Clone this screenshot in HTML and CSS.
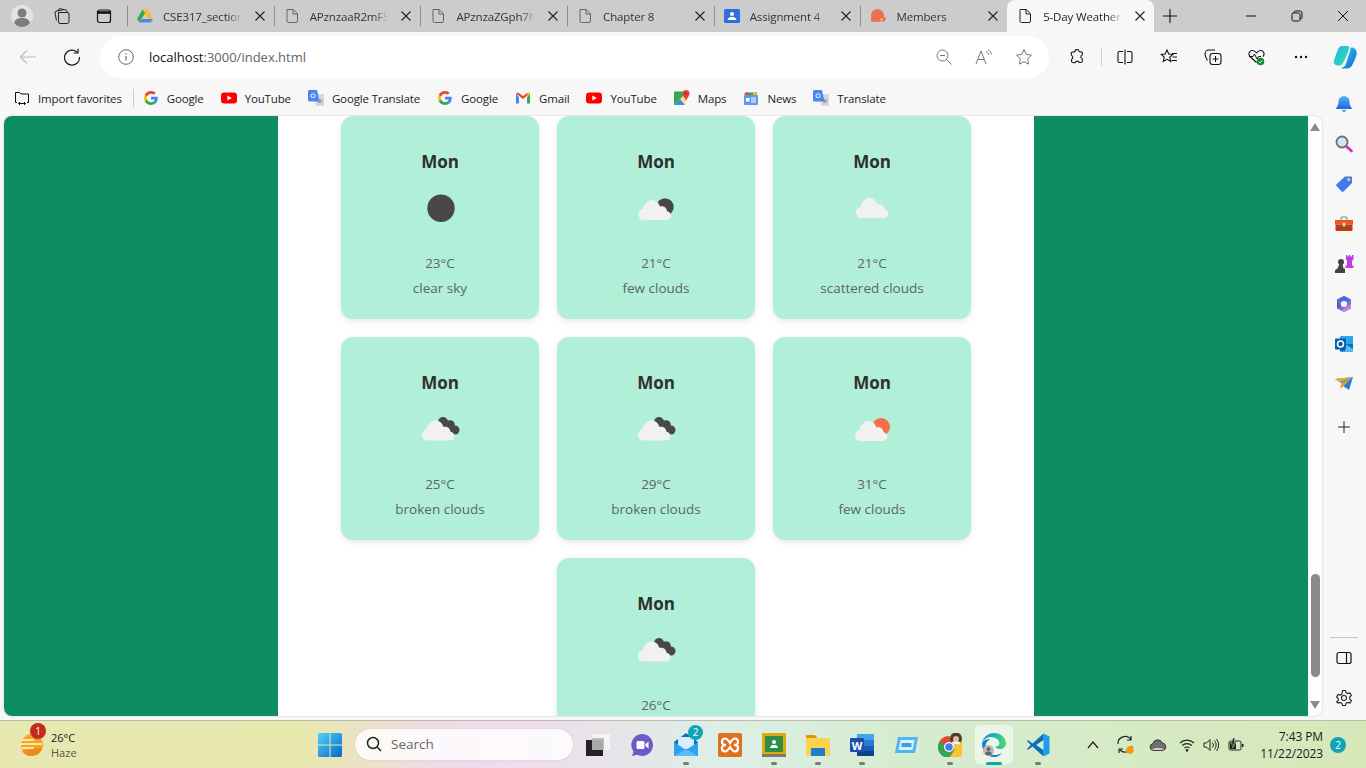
FILE: index.html
```html
<!DOCTYPE html>
<html lang="en">
<head>
  <meta charset="UTF-8">
  <title>5-Day Weather</title>
  <link rel="stylesheet" href="styles.css">
</head>
<body>
  <svg class="defs" xmlns="http://www.w3.org/2000/svg">
    <symbol id="i-x" viewBox="0 0 16 16"><path d="M3.500 3.500l9 9M12.500 3.500l-9 9" fill="none" stroke="currentColor" stroke-width="1.100"/></symbol>
    <symbol id="i-doc" viewBox="0 0 16 16"><path d="M3 1.500h6.200L13.500 5.800V13a1.500 1.500 0 0 1-1.500 1.500H4.500A1.500 1.500 0 0 1 3 13zM9 1.500V6h4.500" fill="none" stroke="currentColor" stroke-width="1"/></symbol>
    <symbol id="i-g" viewBox="0 0 48 48">
      <path fill="#EA4335" d="M24 9.500c3.540 0 6.710 1.220 9.210 3.600l6.850-6.850C35.900 2.380 30.470 0 24 0 14.620 0 6.510 5.380 2.560 13.220l7.980 6.190C12.430 13.720 17.740 9.500 24 9.500z"/>
      <path fill="#4285F4" d="M46.980 24.550c0-1.570-.15-3.090-.38-4.550H24v9.020h12.940c-.58 2.960-2.260 5.480-4.780 7.180l7.730 6c4.510-4.180 7.090-10.360 7.090-17.650z"/>
      <path fill="#FBBC05" d="M10.530 28.590c-.48-1.450-.76-2.990-.76-4.590s.27-3.140.76-4.590l-7.980-6.190C.92 16.460 0 20.120 0 24c0 3.880.92 7.540 2.560 10.780l7.970-6.190z"/>
      <path fill="#34A853" d="M24 48c6.480 0 11.930-2.130 15.890-5.810l-7.730-6c-2.150 1.450-4.920 2.300-8.160 2.300-6.260 0-11.570-4.220-13.470-9.910l-7.980 6.190C6.510 42.620 14.620 48 24 48z"/>
    </symbol>
    <symbol id="i-yt" viewBox="0 0 16 16"><rect y="2.500" width="16" height="11" rx="3" fill="#f00"/><path d="M6.400 5.400v5.200L10.800 8z" fill="#fff"/></symbol>
    <symbol id="i-tr" viewBox="0 0 16 16"><path d="M6 4h10v12H8z" fill="#d4d7dc"/><path d="M12 8l.9 2 2 .2-1.500 1.400.4 2-1.800-1-1.800 1 .4-2-1.500-1.400 2-.2z" fill="#9aa0a6"/><path d="M1.500 0H9l2.500 11.500H1.500A1.500 1.500 0 0 1 0 10V1.500A1.500 1.500 0 0 1 1.500 0z" fill="#4a86f0"/><rect x="3" y="4" width="4" height="3.500" rx="1.500" fill="none" stroke="#fff" stroke-width="1"/></symbol>
    <symbol id="i-cloud" viewBox="0 0 34 22"><path d="M6.500 21.500a5.500 5.500 0 0 1-1-10.900C6.500 5 10.500 1.500 14.500 1.500c3.800 0 7 2.800 8 6.500.6-.2 1.200-.3 1.800-.3 3 0 5 2.200 5.200 5 2.400.3 4 2.200 4 4.500 0 2.500-2 4.300-4.500 4.300z" fill="#f1f1f1"/></symbol>
    <symbol id="i-broken" viewBox="0 0 60 60"><circle cx="33" cy="23" r="5" fill="#48484a"/><circle cx="40" cy="26" r="4.800" fill="#48484a"/><circle cx="45" cy="31" r="4.500" fill="#48484a"/><path d="M30 24l8 8 5 3 5-6-14-9z" fill="#48484a"/></symbol>
  </svg>

  <header class="tabstrip">
    <div class="strip-btn">
      <svg width="24" height="24" viewBox="0 0 24 24"><circle cx="12" cy="12" r="11" fill="#e3e3e1"/><circle cx="12" cy="9" r="4.500" fill="#7d7d7b"/><path d="M4 19c1-4 4-5 8-5s7 1 8 5c-2 2.500-5 4-8 4s-6-1.500-8-4z" fill="#7d7d7b"/></svg>
    </div>
    <div class="strip-btn">
      <svg width="18" height="18" viewBox="0 0 18 18" fill="none" stroke="#222" stroke-width="1"><path d="M5.500 5.500h9a1.500 1.500 0 0 1 1.500 1.500v7.500a2 2 0 0 1-2 2H7a1.500 1.500 0 0 1-1.500-1.500z"/><path d="M3.500 13.500 2 6a1.500 1.500 0 0 1 1.200-1.800L11 2.500"/><path d="M4.500 4l1-1.500A1.500 1.500 0 0 1 7 1.700l6.500 1.500 1 2.300"/></svg>
    </div>
    <div class="strip-btn strip-btn-last">
      <svg width="16" height="16" viewBox="0 0 16 16" fill="none" stroke="#111" stroke-width="1.200"><rect x="1.500" y="2" width="13" height="12.500" rx="2"/><path d="M1.500 4.500h13" stroke-width="2.600"/></svg>
    </div>

    <div class="tab">
      <svg class="tab-icon" width="16" height="16" viewBox="0 0 16 16"><path d="M5.500 1.500h5L16 11h-5z" fill="#f6bf26"/><path d="M5.500 1.500 0 11l2.500 3.500L8 5z" fill="#34a853"/><path d="M2.500 14.500h11L16 11H5z" fill="#4a86f0"/></svg>
      <span class="tab-title">CSE317_section</span>
      <svg class="tab-x" width="16" height="16"><use href="#i-x"/></svg>
    </div>
    <div class="tab">
      <svg class="tab-icon doc" width="16" height="16"><use href="#i-doc"/></svg>
      <span class="tab-title">APznzaaR2mF5</span>
      <svg class="tab-x" width="16" height="16"><use href="#i-x"/></svg>
    </div>
    <div class="tab">
      <svg class="tab-icon doc" width="16" height="16"><use href="#i-doc"/></svg>
      <span class="tab-title">APznzaZGph7N</span>
      <svg class="tab-x" width="16" height="16"><use href="#i-x"/></svg>
    </div>
    <div class="tab">
      <svg class="tab-icon doc" width="16" height="16"><use href="#i-doc"/></svg>
      <span class="tab-title">Chapter 8</span>
      <svg class="tab-x" width="16" height="16"><use href="#i-x"/></svg>
    </div>
    <div class="tab">
      <svg class="tab-icon" width="16" height="16" viewBox="0 0 16 16"><rect y="1" width="16" height="14" rx="1.500" fill="#2f6fdd"/><circle cx="8" cy="6" r="2" fill="#fff"/><path d="M3.500 12c.5-2.500 2.500-3.200 4.500-3.200s4 .7 4.500 3.200z" fill="#fff"/></svg>
      <span class="tab-title">Assignment 4</span>
      <svg class="tab-x" width="16" height="16"><use href="#i-x"/></svg>
    </div>
    <div class="tab">
      <svg class="tab-icon" width="16" height="16" viewBox="0 0 16 16"><circle cx="7.500" cy="7.500" r="6.500" fill="#e9714f"/><path d="M1 9h14.500v2.500a2 2 0 0 1-2 2H4c-2 1.500-3.500 0-3-2z" fill="#e9714f"/><circle cx="11.500" cy="11.500" r="1.200" fill="#f3b9a4"/></svg>
      <span class="tab-title">Members</span>
      <svg class="tab-x" width="16" height="16"><use href="#i-x"/></svg>
    </div>
    <div class="tab tab-active">
      <svg class="tab-icon" width="16" height="16"><use href="#i-doc"/></svg>
      <span class="tab-title">5-Day Weather</span>
      <svg class="tab-x" width="16" height="16"><use href="#i-x"/></svg>
    </div>
    <div class="new-tab">
      <svg width="16" height="16" viewBox="0 0 16 16"><path d="M8 1v14M1 8h14" stroke="#111" stroke-width="1.100"/></svg>
    </div>

    <div class="win-btns">
      <div class="win-btn"><svg width="12" height="12" viewBox="0 0 12 12"><path d="M1 6h10" stroke="#111"/></svg></div>
      <div class="win-btn"><svg width="12" height="12" viewBox="0 0 12 12" fill="none" stroke="#111"><rect x="1" y="3" width="8" height="8" rx="1.500"/><path d="M3 3V2.500A1.500 1.500 0 0 1 4.500 1H9a2 2 0 0 1 2 2v4.500A1.500 1.500 0 0 1 9 9"/></svg></div>
      <div class="win-btn"><svg width="12" height="12" viewBox="0 0 12 12"><path d="M1 1l10 10M11 1L1 11" stroke="#111"/></svg></div>
    </div>
  </header>

  <div class="toolbar">
    <div class="tool">
      <svg width="18" height="18" viewBox="0 0 18 18" fill="none" stroke="#bdbdbd" stroke-width="1.200"><path d="M17 9H1.500M8 2.500 1.500 9 8 15.500"/></svg>
    </div>
    <div class="tool">
      <svg width="18" height="18" viewBox="0 0 18 18" fill="none" stroke="#1a1a1a" stroke-width="1.200"><path d="M14.500 4.500A7.500 7.500 0 1 0 16.500 9"/><path d="M15 .8v4.200h-4.200"/></svg>
    </div>
    <div class="address">
      <svg class="addr-info" width="16" height="16" viewBox="0 0 16 16" fill="none" stroke="#666"><circle cx="8" cy="8" r="7.300"/><path d="M8 7v4.500M8 4.300v1.200" stroke-width="1.200"/></svg>
      <span class="url"><span class="url-host">localhost</span>:3000/index.html</span>
      <div class="addr-tools">
        <div class="addr-tool"><svg width="16" height="16" viewBox="0 0 16 16" fill="none" stroke="#777"><circle cx="6.500" cy="6.500" r="5.500"/><path d="M4 6.500h5M10.500 10.500l5 5"/></svg></div>
        <div class="addr-tool"><svg width="18" height="16" viewBox="0 0 18 16" fill="none" stroke="#777"><path d="M1 15 6 2l5 13M2.800 10.500h6.400"/><path d="M11 2.500c1.500.5 2.500 1.800 2.500 3.300M13 1c2 .7 3.300 2.500 3.300 4.500"/></svg></div>
        <div class="addr-tool"><svg width="18" height="18" viewBox="0 0 18 18" fill="none" stroke="#777"><path d="m9 1.500 2.300 4.900 5.200.7-3.800 3.700.9 5.300L9 13.600l-4.600 2.500.9-5.300L1.500 7.100l5.200-.7z"/></svg></div>
      </div>
    </div>
    <div class="tool tool-ext">
      <svg width="16" height="16" viewBox="0 0 16 16" fill="none" stroke="#111" stroke-width="1.100"><path d="M6 2.500a2 2 0 0 1 4 0c0 .5 2.500.2 3 .7s.5 2.800 0 3c-1.500.3-1.500 3 0 3.300.5.300.5 2.800 0 3.500s-2.500.5-3 .2c-.3-1.500-3.200-1.500-3.500 0-1 .7-3 .7-3.500 0s-.3-2.700-.2-3c1.200-.5 1.200-3.300 0-3.500C2 6 2 3.700 2.800 3.200S5.800 3.300 6 2.500z"/></svg>
    </div>
    <span class="tool-sep"></span>
    <div class="tool">
      <svg width="16" height="16" viewBox="0 0 16 16" fill="none" stroke="#111" stroke-width="1.100"><path d="M6 2.500H2.500a1.500 1.500 0 0 0-1.500 1.500v8a1.500 1.500 0 0 0 1.500 1.500H6M10 2.500h3.500A1.500 1.500 0 0 1 15 4v8a1.500 1.500 0 0 1-1.500 1.500H10M8 .5v15"/></svg>
    </div>
    <div class="tool">
      <svg width="18" height="18" viewBox="0 0 18 18" fill="none" stroke="#111" stroke-width="1.100"><path d="m7 2 1.800 4 4 .4-3 2.800.9 4.300L7 11.300 3.300 13.500l.9-4.300-3-2.800 4-.4z"/><path d="M12 5.500h5M12.500 9h4.500M11.500 12.500H17"/></svg>
    </div>
    <div class="tool">
      <svg width="18" height="18" viewBox="0 0 18 18" fill="none" stroke="#111" stroke-width="1.100"><rect x="6" y="5.500" width="11" height="11" rx="2.500"/><path d="M11.500 8v6M8.500 11h6"/><path d="M3.500 12.500C2 10 1 8 1 6c0-2 1.500-4 3.500-4H11"/></svg>
    </div>
    <div class="tool">
      <svg width="18" height="18" viewBox="0 0 18 18"><path d="M8.500 14.500 2 8.500C0 6.500 1 3 3.800 2.500c2-.3 3.500.8 4.700 2.300 1.200-1.500 2.700-2.600 4.700-2.300 2.800.5 3.800 4 1.800 6" fill="none" stroke="#111" stroke-width="1.100"/><path d="M1 8.500h4l1.500-2.500L9 11l1.500-2.500H13" fill="none" stroke="#111"/><circle cx="12.500" cy="13.500" r="3.800" fill="#178a2e"/><path d="m10.800 13.500 1.300 1.300 2.200-2.300" fill="none" stroke="#fff"/></svg>
    </div>
    <div class="tool">
      <svg width="14" height="4" viewBox="0 0 14 4" fill="#111"><circle cx="2" cy="2" r="1.200"/><circle cx="7" cy="2" r="1.200"/><circle cx="12" cy="2" r="1.200"/></svg>
    </div>
    <div class="tool tool-last">
      <svg width="24" height="24" viewBox="0 0 24 24">
        <defs>
          <linearGradient id="cop-a" x1="0" y1="0" x2="1" y2="1"><stop offset="0" stop-color="#1fb8ee"/><stop offset="1" stop-color="#2ce0a0"/></linearGradient>
          <linearGradient id="cop-b" x1="0" y1="0" x2="1" y2="1"><stop offset="0" stop-color="#2ad4e4"/><stop offset="1" stop-color="#1560dc"/></linearGradient>
        </defs>
        <path class="cop-a" d="M9 1.500h5.500c1.500 0 1.800 1 1.300 2L12 13c-1 2.500-3 7-5 7H4.500C2 20 .8 18 1.300 16L5 5.500C5.800 3 7 1.500 9 1.500z" fill="url(#cop-a)" stroke="url(#cop-a)"/>
        <path d="M18 3h1c2 0 3.500 1 4 3.500.8 4-1 6-1.800 8.500L19 19.500c-1 2.500-2.500 3.500-5 3.500H9c2 0 3.500-2 4.500-4.500l4-12.500c.3-1 .5-2 .5-3z" fill="url(#cop-b)" stroke="url(#cop-b)"/>
      </svg>
    </div>
  </div>

  <div class="below">
    <div class="browser-main">
      <nav class="favbar">
        <div class="fav fav-import">
          <svg width="16" height="16" viewBox="0 0 16 16" fill="none" stroke="#111"><path d="M3 12.500H1.500V2.500h4L7 4h7.500v8.500H13"/><path d="M4.500 13.500h7M6 12l-1.500 1.500L6 15M10 12l1.500 1.500L10 15"/></svg>
          <span>Import favorites</span>
        </div>
        <span class="fav-sep"></span>
        <div class="fav"><svg width="16" height="14"><use href="#i-g"/></svg><span>Google</span></div>
        <div class="fav"><svg width="16" height="16"><use href="#i-yt"/></svg><span>YouTube</span></div>
        <div class="fav"><svg width="16" height="16"><use href="#i-tr"/></svg><span>Google Translate</span></div>
        <div class="fav"><svg width="16" height="14"><use href="#i-g"/></svg><span>Google</span></div>
        <div class="fav">
          <svg width="16" height="16" viewBox="0 0 16 16"><path d="M1 3.500v10h3v-6z" fill="#4285f4"/><path d="M15 3.500v10h-3v-6z" fill="#34a853"/><path d="M1 3.500 8 9l7-5.500-2-1L8 6 3 2.500z" fill="#ea4335"/><path d="M12 7.500 15 3.500 13.500 2.500 12 4z" fill="#fbbc04"/></svg>
          <span>Gmail</span>
        </div>
        <div class="fav"><svg width="16" height="16"><use href="#i-yt"/></svg><span>YouTube</span></div>
        <div class="fav">
          <svg width="16" height="16" viewBox="0 0 16 16"><path d="M0 1.500h11V15H0z" fill="#34a853"/><path d="M0 15 11 4v11z" fill="#fbe084"/><path d="M0 15l6-6 5 6z" fill="#4a86f0"/><path d="M12 0a3.600 3.600 0 0 1 3.600 3.600C15.600 6 13 8 12 11c-1-3-3.600-5-3.600-7.400A3.600 3.600 0 0 1 12 0z" fill="#ea4335"/><circle cx="12" cy="3.600" r="1.200" fill="#a52714"/></svg>
          <span>Maps</span>
        </div>
        <div class="fav">
          <svg width="16" height="16" viewBox="0 0 16 16"><path d="M2 2.500h12V6H2z" fill="#34a853"/><path d="M1.500 3.500 5 2l2 3H1.500z" fill="#ea4335"/><path d="M10 2l4.500 2L14 5h-4z" fill="#fbbc04"/><rect x="1" y="5" width="14" height="10" rx="1.200" fill="#5e97f6"/><rect x="3" y="8" width="3.500" height="3.500" fill="#fff"/><path d="M8 8h5M8 10h5M8 12h5" stroke="#fff"/></svg>
          <span>News</span>
        </div>
        <div class="fav"><svg width="16" height="16"><use href="#i-tr"/></svg><span>Translate</span></div>
      </nav>

      <div class="viewport">
        <main class="page">
          <div class="forecast">
            <section class="card">
              <h3>Mon</h3>
              <svg class="wx" width="60" height="60" viewBox="0 0 60 60"><circle cx="31" cy="30.300" r="13.700" fill="#48484a"/></svg>
              <p class="temp">23°C</p>
              <p class="desc">clear sky</p>
            </section>
            <section class="card">
              <h3>Mon</h3>
              <svg class="wx" width="60" height="60" viewBox="0 0 60 60"><circle cx="39" cy="29" r="8.700" fill="#48484a"/><use href="#i-cloud" x="11.500" y="20.500" width="34" height="22"/></svg>
              <p class="temp">21°C</p>
              <p class="desc">few clouds</p>
            </section>
            <section class="card">
              <h3>Mon</h3>
              <svg class="wx" width="60" height="60" viewBox="0 0 60 60"><use href="#i-cloud" x="13" y="18.500" width="34" height="22"/></svg>
              <p class="temp">21°C</p>
              <p class="desc">scattered clouds</p>
            </section>
            <section class="card">
              <h3>Mon</h3>
              <svg class="wx" width="60" height="60" viewBox="0 0 60 60"><use href="#i-broken" width="60" height="60"/><use href="#i-cloud" x="11" y="20" width="34" height="22"/></svg>
              <p class="temp">25°C</p>
              <p class="desc">broken clouds</p>
            </section>
            <section class="card">
              <h3>Mon</h3>
              <svg class="wx" width="60" height="60" viewBox="0 0 60 60"><use href="#i-broken" width="60" height="60"/><use href="#i-cloud" x="11" y="20" width="34" height="22"/></svg>
              <p class="temp">29°C</p>
              <p class="desc">broken clouds</p>
            </section>
            <section class="card">
              <h3>Mon</h3>
              <svg class="wx" width="60" height="60" viewBox="0 0 60 60"><circle cx="39" cy="28" r="9" fill="#f4704a"/><use href="#i-cloud" x="12" y="20.500" width="34" height="22"/></svg>
              <p class="temp">31°C</p>
              <p class="desc">few clouds</p>
            </section>
            <section class="card">
              <h3>Mon</h3>
              <svg class="wx" width="60" height="60" viewBox="0 0 60 60"><use href="#i-broken" width="60" height="60"/><use href="#i-cloud" x="11" y="20" width="34" height="22"/></svg>
              <p class="temp">26°C</p>
            </section>
          </div>
        </main>
        <div class="page-scroll">
          <svg class="scroll-arrow" width="10" height="8" viewBox="0 0 10 8"><path d="M5 0l5 8H0z" fill="#8a8a8a"/></svg>
          <div class="scroll-thumb"></div>
          <svg class="scroll-arrow" width="10" height="8" viewBox="0 0 10 8"><path d="M5 8l5-8H0z" fill="#8a8a8a"/></svg>
        </div>
      </div>
    </div>

    <aside class="sidebar">
      <div class="side-item">
        <svg width="18" height="18" viewBox="0 0 18 18"><defs><linearGradient id="bell" x1="0" y1="0" x2="0" y2="1"><stop offset="0" stop-color="#5ab4f8"/><stop offset="1" stop-color="#1668e8"/></linearGradient></defs><path d="M9 1a5.500 5.500 0 0 1 5.500 5.500c0 4 1.500 5 2.500 7.500H1c1-2.500 2.500-3.500 2.500-7.500A5.500 5.500 0 0 1 9 1z" fill="url(#bell)"/><path d="M6.500 15h5L9 17.500z" fill="#7d8ba0"/></svg>
      </div>
      <div class="side-item">
        <svg width="18" height="18" viewBox="0 0 18 18"><circle cx="7" cy="7" r="5.500" fill="#cfe6f4" stroke="#6f6f6f" stroke-width="1.800"/><path d="m11.500 11.500 5 4.500" stroke="#c42fd0" stroke-width="2.600" stroke-linecap="round"/></svg>
      </div>
      <div class="side-item">
        <svg width="18" height="18" viewBox="0 0 18 18"><path d="M10 1.500h6a1 1 0 0 1 1 1V8l-8.500 8.500a1.300 1.300 0 0 1-1.800 0L1.500 11a1.300 1.300 0 0 1 0-1.800z" fill="#3d7bea"/><circle cx="13.800" cy="4.500" r="1.500" fill="#f7cf4a"/></svg>
      </div>
      <div class="side-item">
        <svg width="18" height="18" viewBox="0 0 18 18"><path d="M6 5V3.500A1.500 1.500 0 0 1 7.500 2h3A1.500 1.500 0 0 1 12 3.500V5" fill="none" stroke="#888" stroke-width="1.200"/><path d="M0 5h18v4.500H0z" fill="#e9591f"/><path d="M.5 9.500h17V15a1 1 0 0 1-1 1h-15a1 1 0 0 1-1-1z" fill="#b83c10"/><rect x="7.500" y="7.500" width="3" height="4" rx=".8" fill="#cfcfcf"/></svg>
      </div>
      <div class="side-item">
        <svg width="20" height="20" viewBox="0 0 20 20"><path d="M12 1h1.500v1.500H15V1h1.500v1.500H18V1h1.500v4.500L18 7v4.500h1.500V14h-8v-2.500H13V7l-1-1.500z" fill="#c43be6"/><circle cx="7" cy="8" r="3" fill="#444"/><path d="M5.500 10h3l1 4.500H11V19H1v-2.500c0-1 1.500-1 2.500-2z" fill="#444"/></svg>
      </div>
      <div class="side-item">
        <svg width="18" height="18" viewBox="0 0 18 18"><path d="M9 1 16 4.500v9L9 17l-7-3.500v-9z" fill="#8f68d8"/><path d="M2 4.500 9 1l7 3.500L9 8z" fill="#3f6fe0"/><path d="M2 4.500V13.500l4-2z" fill="#5b52c8"/><path d="M16 9v4.500L9 17l-3-1.500z" fill="#b68be0"/><circle cx="9" cy="9" r="3" fill="#fff"/></svg>
      </div>
      <div class="side-item">
        <svg width="18" height="18" viewBox="0 0 18 18"><rect x="5" y="1" width="13" height="15.500" rx="1" fill="#28a8ea"/><path d="M5 9h13v7.500H5z" fill="#0b6fc0"/><path d="M10 9l8 5v2.500H10z" fill="#4fc3f7"/><rect y="3.500" width="11" height="11" rx="1" fill="#0a5cb0"/><circle cx="5.500" cy="9" r="3" fill="none" stroke="#fff" stroke-width="1.500"/></svg>
      </div>
      <div class="side-item">
        <svg width="18" height="18" viewBox="0 0 18 18"><path d="M0 4 18 2 9 10z" fill="#36a0ec"/><path d="M18 2 5 7 0 4z" fill="#f2a71c"/><path d="M18 2 14 15l-7.500-5z" fill="#1f7fd8"/><path d="M18 2 6 9 5 14l3.500-3z" fill="#e8a020"/></svg>
      </div>
      <div class="side-item side-add">
        <svg width="14" height="14" viewBox="0 0 14 14"><path d="M7 1v12M1 7h12" stroke="#222"/></svg>
      </div>
      <div class="side-bottom">
        <span class="side-sep"></span>
        <div class="side-item">
          <svg width="16" height="14" viewBox="0 0 16 14" fill="none" stroke="#111" stroke-width="1.200"><rect x="1" y="1.500" width="14" height="11" rx="2"/><path d="M10.500 1.500v11"/></svg>
        </div>
        <div class="side-item">
          <svg width="18" height="18" viewBox="0 0 18 18" fill="none" stroke="#222" stroke-width="1.100"><circle cx="9" cy="9" r="2.500"/><path d="M7.500 1.500h3l.5 2.200 1.700.9 2.200-.7 1.500 2.600-1.700 1.500v2l1.700 1.500-1.500 2.600-2.200-.7-1.700.9-.5 2.200h-3l-.5-2.200-1.700-.9-2.200.7L1.600 13l1.700-1.500v-2L1.600 8l1.500-2.600 2.200.7L7 5.200z"/></svg>
        </div>
      </div>
    </aside>
  </div>

  <footer class="taskbar">
    <div class="tb-weather">
      <span class="tb-wicon">
        <svg width="26" height="26" viewBox="0 0 26 26"><circle cx="13" cy="13" r="11" fill="#f5a623"/><path d="M2 8h13M1 12h22M3 16h12" stroke="#fbe7a8" stroke-width="2"/><path d="M3 19a11 11 0 0 0 20-4z" fill="#ef8b1e"/></svg>
        <span class="tb-badge">1</span>
      </span>
      <div class="tb-wtext">
        <span class="tb-temp">26°C</span>
        <span class="tb-cond">Haze</span>
      </div>
    </div>

    <svg class="tb-start" width="24" height="24" viewBox="0 0 24 24">
      <defs><linearGradient id="win" x1="0" y1="0" x2="1" y2="1"><stop offset="0" stop-color="#52d1fb"/><stop offset="1" stop-color="#0668c8"/></linearGradient></defs>
      <path d="M1.500 0H11.500V11.500H0V1.500A1.500 1.500 0 0 1 1.500 0zM12.500 0H22.500A1.500 1.500 0 0 1 24 1.500V11.500H12.500zM0 12.500H11.500V24H1.500A1.500 1.500 0 0 1 0 22.500zM12.500 12.500H24V22.500A1.500 1.500 0 0 1 22.500 24H12.500z" fill="url(#win)"/>
    </svg>

    <div class="tb-search">
      <svg width="16" height="16" viewBox="0 0 16 16" fill="none" stroke="#222" stroke-width="1.500"><circle cx="7" cy="7" r="5.500"/><path d="m11 11 4 4"/></svg>
      <span>Search</span>
    </div>

    <div class="tb-apps">
      <div class="tb-app">
        <svg width="24" height="24" viewBox="0 0 24 24"><rect x="6" y="1" width="18" height="16" fill="#f4f4f4"/><path d="M6 5h12v12H6z" fill="#bdbdbd"/><rect y="7" width="17" height="16" fill="#222"/><path d="M6 7h11v10H6z" fill="#a8a8a8"/></svg>
      </div>
      <div class="tb-app">
        <svg width="24" height="24" viewBox="0 0 24 24"><path d="M12 1a11 11 0 1 1-5 20.800L2 23l1.500-4.500A11 11 0 0 1 12 1z" fill="#6b5ac8"/><rect x="6.500" y="8" width="8" height="8" rx="1.500" fill="#fff"/><path d="m15.500 11 3-2.500v7l-3-2.500z" fill="#fff"/></svg>
      </div>
      <div class="tb-app">
        <svg width="24" height="24" viewBox="0 0 24 24"><path d="M0 9 12 0l12 9v14H0z" fill="#0f6cbd"/><path d="M4 4h16v12H4z" fill="#d8ecfa"/><path d="M0 9v14h24V9L12 17z" fill="#2aa3ee"/><path d="m0 23 12-7 12 7z" fill="#59bdf5"/></svg>
        <span class="tb-app-badge">2</span>
        <span class="tb-dot"></span>
      </div>
      <div class="tb-app">
        <svg width="24" height="24" viewBox="0 0 24 24"><rect width="24" height="24" rx="2" fill="#e0701e"/><path d="M7 5.500c2 0 3.500 2 5 4.500 1.500-2.500 3-4.500 5-4.500 2.500 0 3 2 3 3.500 0 2-2 3-4 3 2 0 4 1 4 3 0 1.500-.5 3.500-3 3.500-2 0-3.500-2-5-4.500-1.500 2.500-3 4.500-5 4.500-2.500 0-3-2-3-3.500 0-2 2-3 4-3-2 0-4-1-4-3 0-1.500.5-3.500 3-3.500z" fill="none" stroke="#fff" stroke-width="2.200"/></svg>
      </div>
      <div class="tb-app">
        <svg width="24" height="24" viewBox="0 0 24 24"><rect width="24" height="24" fill="#e0a912"/><rect y="21" width="24" height="3" fill="#7c7c6c"/><rect x="3" y="3" width="18" height="16" fill="#2d8f47"/><circle cx="12" cy="9" r="2" fill="#fff"/><path d="M8 15c.5-2.500 2-3 4-3s3.500.5 4 3z" fill="#fff"/></svg>
        <span class="tb-dot"></span>
      </div>
      <div class="tb-app">
        <svg width="24" height="24" viewBox="0 0 24 24"><path d="M0 2h9l2.500 3H0z" fill="#d99a10"/><path d="M0 5h24v17a1 1 0 0 1-1 1H1a1 1 0 0 1-1-1z" fill="#fcd34f"/><path d="M6 15h12a1 1 0 0 1 1 1v7H5v-7a1 1 0 0 1 1-1z" fill="#1f7fc4"/></svg>
        <span class="tb-dot"></span>
      </div>
      <div class="tb-app">
        <svg width="24" height="24" viewBox="0 0 24 24"><rect x="7" y="1" width="17" height="6" fill="#41a5ee"/><rect x="7" y="7" width="17" height="6" fill="#2b7cd3"/><rect x="7" y="13" width="17" height="5" fill="#185abd"/><rect x="7" y="18" width="17" height="5" fill="#103f91"/><rect y="5" width="14" height="14" rx="1" fill="#1a4fb0"/><text class="tb-w" x="7" y="16.500">W</text></svg>
        <span class="tb-dot"></span>
      </div>
      <div class="tb-app">
        <svg width="24" height="24" viewBox="0 0 24 24"><path d="M4 4h20l-3 16H1z" fill="#4fb7ef"/><path d="M6.500 7h14l-2 10H4.500z" fill="#d8f1fc"/><rect x="7.500" y="10" width="10" height="4" fill="#3aa0e0"/></svg>
      </div>
      <div class="tb-app">
        <svg width="24" height="24" viewBox="0 0 24 24"><circle cx="11" cy="14" r="11" fill="#e5463a"/><path d="M11 14 1.500 8.500A11 11 0 0 0 11 25l5-8z" fill="#35a455"/><path d="M11 3h9.600A11 11 0 0 1 11 25l5.500-8z" fill="#f8c62c"/><circle cx="11" cy="14" r="5" fill="#fff"/><circle cx="11" cy="14" r="3.800" fill="#3f7fe8"/><circle cx="18" cy="5.500" r="6" fill="#4a3c32"/><circle cx="18" cy="6" r="3" fill="#e3b79b"/><path d="M13.500 9c2-1 6-1 9 0l-1 2.500h-6z" fill="#f2f2f2"/></svg>
        <span class="tb-dot"></span>
      </div>
      <div class="tb-app tb-app-active">
        <svg width="24" height="24" viewBox="0 0 24 24">
          <defs><linearGradient id="edge" x1="0" y1="0" x2="1" y2="0"><stop offset="0" stop-color="#1488d8"/><stop offset=".55" stop-color="#1cb8b8"/><stop offset="1" stop-color="#56d860"/></linearGradient></defs>
          <path d="M12 0c7 0 12 5 12 10.500 0 3.500-3 5.500-6 5.500s-4.500-1-4.500-2.500c3 0 4-1.500 4-3C17.500 6 12 4 8.500 4 5 4 1.500 6.500 0 10 1 4.500 6 0 12 0z" fill="url(#edge)"/>
          <path d="M0 10c2-3.500 6-4 8-3.500C4.500 8 3 11 3.500 14.500c.5 3.500 3.500 7 8.500 7.500 3 .3 6-.7 8-2.500-2 3-5 4.500-8 4.500-7 0-12-6-12-14z" fill="#0f7fc8"/>
          <circle cx="6.500" cy="17.500" r="5.500" fill="#b9b9b9"/><circle cx="6.500" cy="16" r="2" fill="#666"/><path d="M3 21c.5-2 2-2.500 3.500-2.500S9.500 19 10 21a5.500 5.500 0 0 1-7 0z" fill="#666"/>
        </svg>
        <span class="tb-bar"></span>
      </div>
      <div class="tb-app">
        <svg width="24" height="24" viewBox="0 0 24 24"><path d="M17.500.5 23 3.200a1 1 0 0 1 .5.800v16a1 1 0 0 1-.5.800l-5.500 2.700z" fill="#1f9cf0"/><path d="M17.500.5 6.500 10.500 2.300 7.300.8 8.100 4.800 12l-4 3.900 1.500.8 4.200-3.200 11 10V17L10 12l7.500-5z" fill="#0a6fb8"/></svg>
        <span class="tb-dot"></span>
      </div>
    </div>

    <div class="tray">
      <div class="tray-slot">
        <svg width="12" height="8" viewBox="0 0 12 8" fill="none" stroke="#222" stroke-width="1.200"><path d="M1 7l5-6 5 6"/></svg>
      </div>
      <div class="tray-slot">
        <svg width="20" height="20" viewBox="0 0 20 20"><path d="M2 9A7 7 0 0 1 15 5M15 1v4h-4M16 11A7 7 0 0 1 4 15M3 18v-4h4" fill="none" stroke="#222" stroke-width="1.200"/><circle cx="14" cy="15" r="3.800" fill="#f59a0c"/></svg>
      </div>
      <div class="tray-slot">
        <svg width="18" height="12" viewBox="0 0 18 12"><path d="M4.500 11.500A3.500 3.500 0 0 1 3.800 4.600 5 5 0 0 1 13.300 4a3.800 3.800 0 0 1 .5 7.500z" fill="#6f6f6f" stroke="#222" stroke-width=".8"/><path d="M3 11c2-3 10-3 12 0z" fill="#cfcfcf"/></svg>
      </div>
      <div class="tray-slot tray-small">
        <svg width="16" height="14" viewBox="0 0 16 14" fill="none" stroke="#222" stroke-width="1.100"><path d="M1 5a10 10 0 0 1 14 0M3.200 7.500a7 7 0 0 1 9.600 0M5.500 10a3.500 3.500 0 0 1 5 0"/><circle cx="8" cy="12.300" r=".8" fill="#222"/></svg>
      </div>
      <div class="tray-slot tray-small">
        <svg width="16" height="14" viewBox="0 0 16 14" fill="none" stroke="#222" stroke-width="1"><path d="M1 5h2.500L7 1.500v11L3.500 9H1zM9.500 4.500a4 4 0 0 1 0 5M11.500 2.500a7 7 0 0 1 0 9M13.500 1a9.500 9.500 0 0 1 0 12"/></svg>
      </div>
      <div class="tray-slot tray-small">
        <svg width="16" height="14" viewBox="0 0 16 14"><rect x="1" y="3" width="12" height="9" rx="1.500" fill="none" stroke="#222"/><rect x="2" y="4" width="6" height="7" fill="#222"/><rect x="14" y="6" width="1.500" height="3" fill="#222"/><path d="M5 0 3 6h2.500L4.500 10 8 5H6l1-5z" fill="#222" stroke="#dbe8c0" stroke-width=".5"/></svg>
      </div>
      <div class="clock">
        <span>7:43 PM</span>
        <span>11/22/2023</span>
      </div>
      <span class="notif">2</span>
    </div>
  </footer>
</body>
</html>
```

FILE: styles.css
```css
* {
  box-sizing: border-box;
}
html, body {
  height: 768px;
  overflow: hidden;
}
body {
  margin: 0;
  display: flex;
  flex-direction: column;
  font-family: "Open Sans", "Noto Sans", sans-serif;
  font-size: 11.5px;
  letter-spacing: -0.15px;
  color: #222;
  background: #f7f7f7;
}
.defs {
  display: none;
}

/* tab strip */
.tabstrip {
  display: flex;
  align-items: center;
  height: 32px;
  padding-left: 2px;
  background: #cccccc;
  flex: none;
}
.strip-btn {
  display: flex;
  align-items: center;
  justify-content: center;
  width: 40px;
  height: 32px;
}
.strip-btn-last {
  margin-left: 2px;
  margin-right: 3px;
}
.tab {
  display: flex;
  align-items: center;
  gap: 10px;
  width: 146.7px;
  height: 32px;
  padding: 0 6px 0 10px;
  position: relative;
  color: #333;
}
.tab::before {
  content: "";
  position: absolute;
  left: 0;
  top: 6px;
  bottom: 6px;
  width: 1px;
  background: #8f8f8f;
}
.tab-icon {
  flex: none;
}
.tab-icon.doc {
  color: #666;
}
.tab-title {
  flex: 1;
  min-width: 0;
  white-space: nowrap;
  overflow: hidden;
  -webkit-mask-image: linear-gradient(to right, #000 82%, transparent);
  mask-image: linear-gradient(to right, #000 82%, transparent);
}
.tab-x {
  flex: none;
  color: #222;
}
.tab-active {
  background: #f7f7f7;
  border-radius: 8px 8px 0 0;
  color: #222;
}
.tab-active::before {
  display: none;
}
.new-tab {
  display: flex;
  align-items: center;
  justify-content: center;
  width: 32px;
  height: 32px;
}
.win-btns {
  display: flex;
  margin-left: auto;
}
.win-btn {
  display: flex;
  align-items: center;
  justify-content: center;
  width: 46px;
  height: 32px;
}

/* toolbar */
.toolbar {
  display: flex;
  align-items: center;
  height: 48px;
  padding: 4px 0 2px 6px;
  background: #f7f7f7;
  flex: none;
}
.tool {
  display: flex;
  align-items: center;
  justify-content: center;
  width: 44px;
  height: 42px;
  flex: none;
}
.tool-last {
  width: 43px;
}
.tool-sep {
  width: 1px;
  height: 18px;
  margin: 0 1px 0 2px;
  background: #d0d0d0;
  flex: none;
}
.address {
  display: flex;
  align-items: center;
  width: 949px;
  height: 42px;
  margin: 0 6px;
  padding: 0 5px 0 18px;
  background: #fff;
  border-radius: 21px;
  flex: none;
}
.url {
  margin-left: 15px;
  font-size: 13px;
  letter-spacing: 0;
  color: #5f6368;
}
.url-host {
  color: #111;
}
.addr-tools {
  display: flex;
  margin-left: auto;
}
.addr-tool {
  display: flex;
  align-items: center;
  justify-content: center;
  width: 40px;
  height: 32px;
}

.below {
  display: flex;
  height: 640px;
  flex: none;
}
.browser-main {
  display: flex;
  flex-direction: column;
  width: 1322px;
}

/* favourites bar */
.favbar {
  display: flex;
  align-items: center;
  height: 36px;
  padding-left: 14px;
  flex: none;
}
.fav {
  display: flex;
  align-items: center;
  gap: 8px;
  margin-right: 17px;
  color: #1c1c1c;
  white-space: nowrap;
}
.fav-import {
  margin-right: 0;
}
.fav-sep {
  width: 1px;
  height: 18px;
  margin: 0 9px 0 11px;
  background: #c8c8c8;
}

/* the page in the browser */
.viewport {
  display: flex;
  height: 600px;
  margin-left: 4px;
  border-radius: 8px;
  overflow: hidden;
  box-shadow: 0 0 2px rgba(0,0,0,0.25);
  background: #fff;
}
.page {
  flex: 1;
  min-width: 0;
  background: #0d8d60;
}
.forecast {
  display: flex;
  flex-wrap: wrap;
  justify-content: center;
  align-content: flex-start;
  gap: 17.8px 18px;
  width: 756px;
  min-height: 600px;
  margin: 0 auto;
  padding: 0 63px;
  background: #fff;
}
.card {
  display: flex;
  flex-direction: column;
  align-items: center;
  width: 198px;
  height: 203px;
  padding-top: 32px;
  background: #b1efd9;
  border-radius: 12px;
  box-shadow: 0 2px 6px rgba(0,0,0,0.1);
  letter-spacing: 0;
}
.card h3 {
  margin: 0 0 2px;
  font-size: 17px;
  line-height: 28px;
  font-weight: 700;
  color: #2f2f2f;
}
.wx {
  display: block;
  margin-bottom: 13px;
  flex: none;
}
.card p {
  margin: 0;
  font-size: 13.5px;
  line-height: 25px;
  color: #5c6664;
}
.page-scroll {
  display: flex;
  flex-direction: column;
  align-items: center;
  width: 14px;
  padding: 7px 0 7px 0;
  background: #fdfdfd;
  flex: none;
}
.scroll-thumb {
  width: 9px;
  height: 103px;
  margin-top: auto;
  margin-bottom: 24px;
  border-radius: 5px;
  background: #8a8a8a;
}

/* edge sidebar */
.sidebar {
  display: flex;
  flex-direction: column;
  width: 44px;
  padding-top: 4px;
  flex: none;
}
.side-item {
  display: flex;
  align-items: center;
  justify-content: center;
  height: 40px;
  flex: none;
}
.side-add {
  margin-top: 3px;
}
.side-bottom {
  margin-top: auto;
  margin-bottom: 2px;
}
.side-sep {
  display: block;
  width: 28px;
  height: 1px;
  margin: 0 auto;
  background: #c6c6c6;
}

/* windows taskbar */
.taskbar {
  display: flex;
  align-items: center;
  height: 48px;
  border-top: 1px solid #b9bdaa;
  background: linear-gradient(to right, #e6e8b0 0, #e6e8ae 300px, #f2d9e8 440px, #f0dcec 520px, #dcefe6 720px, #d6ecd0 900px, #d6e8b8 1366px);
  letter-spacing: 0;
  flex: none;
}
.tb-weather {
  display: flex;
  align-items: center;
  width: 318px;
  padding-left: 19px;
  flex: none;
}
.tb-wicon {
  position: relative;
  display: block;
  width: 26px;
  height: 26px;
  margin-right: 6px;
}
.tb-badge {
  position: absolute;
  top: -9px;
  left: 11px;
  width: 16px;
  height: 16px;
  border-radius: 50%;
  background: #c42b1c;
  color: #fff;
  font-size: 10px;
  line-height: 16px;
  text-align: center;
}
.tb-wtext {
  display: flex;
  flex-direction: column;
  font-size: 11px;
  line-height: 15px;
}
.tb-temp {
  color: #1a1a1a;
}
.tb-cond {
  color: #555;
}
.tb-start {
  flex: none;
}
.tb-search {
  display: flex;
  align-items: center;
  gap: 9px;
  width: 218px;
  height: 31px;
  margin-left: 13px;
  padding: 0 0 2px 11px;
  border-radius: 16px;
  background: rgba(255,255,255,0.82);
  box-shadow: 0 0 1px rgba(0,0,0,0.3);
  color: #666;
  font-size: 13.5px;
  flex: none;
}
.tb-apps {
  display: flex;
  margin-left: 3px;
}
.tb-app {
  position: relative;
  display: flex;
  align-items: center;
  justify-content: center;
  width: 44px;
  height: 47px;
}
.tb-app-active::before {
  content: "";
  position: absolute;
  left: 3px;
  right: 3px;
  top: 4px;
  bottom: 4px;
  border-radius: 5px;
  background: rgba(255,255,255,0.55);
}
.tb-app svg {
  position: relative;
}
.tb-dot {
  position: absolute;
  left: 19px;
  bottom: 3px;
  width: 6px;
  height: 3px;
  border-radius: 2px;
  background: #7a7a7a;
}
.tb-bar {
  position: absolute;
  left: 14px;
  bottom: 3px;
  width: 16px;
  height: 3px;
  border-radius: 2px;
  background: #10a5b5;
}
.tb-app-badge {
  position: absolute;
  top: 4px;
  left: 24px;
  width: 15px;
  height: 15px;
  border-radius: 50%;
  background: #10a5b5;
  color: #fff;
  font-size: 10px;
  line-height: 15px;
  text-align: center;
}
.tb-w {
  fill: #fff;
  font-size: 11px;
  font-weight: 700;
  text-anchor: middle;
}
.tray {
  display: flex;
  align-items: center;
  margin-left: auto;
  margin-right: 20px;
}
.tray-slot {
  display: flex;
  align-items: center;
  justify-content: center;
  width: 32.5px;
  height: 47px;
}
.tray-small {
  width: 24.5px;
}
.clock {
  display: flex;
  flex-direction: column;
  align-items: flex-end;
  width: 75px;
  font-size: 12px;
  letter-spacing: -0.1px;
  line-height: 17px;
  color: #1a1a1a;
}
.notif {
  width: 16px;
  height: 16px;
  margin-left: 7px;
  border-radius: 50%;
  background: #10a5b5;
  color: #fff;
  font-size: 10px;
  line-height: 16px;
  text-align: center;
}
```
